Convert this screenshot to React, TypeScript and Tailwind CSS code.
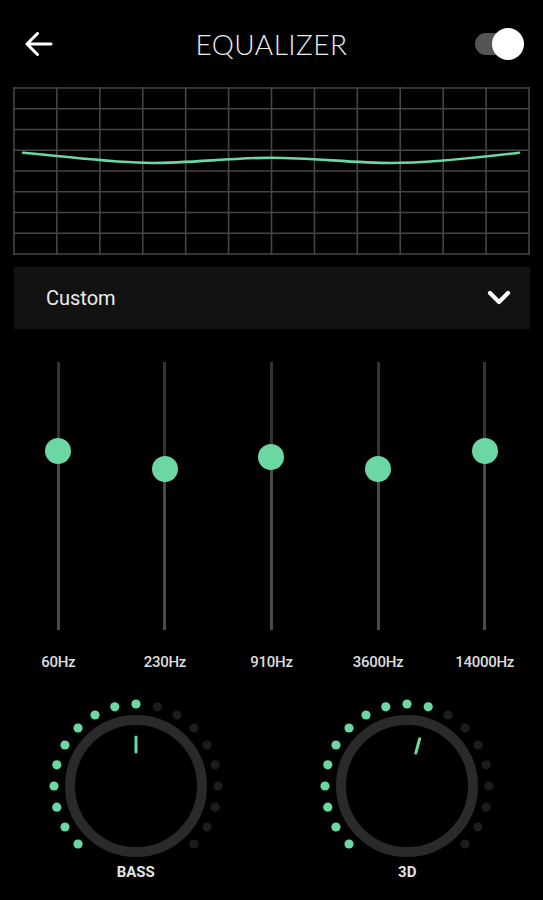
import React from "react";

const GREEN = "#6bd7a3";

function Knob({ value, angle, label }: { value: number; angle: number; label: string }) {
  const dots = [];
  for (let i = 0; i < 19; i++) {
    const a = (-135 + i * 15) * (Math.PI / 180);
    const x = 88 + 82 * Math.sin(a);
    const y = 88 - 82 * Math.cos(a);
    dots.push(<circle key={i} cx={x} cy={y} r={4.6} fill={i < value ? GREEN : "#1c1c1c"} />);
  }
  const r = (angle * Math.PI) / 180;
  const x1 = 88 + 34 * Math.sin(r);
  const y1 = 88 - 34 * Math.cos(r);
  const x2 = 88 + 49 * Math.sin(r);
  const y2 = 88 - 49 * Math.cos(r);
  return (
    <div className="flex flex-col items-center">
      <svg width="176" height="176" viewBox="0 0 176 176">
        {dots}
        <circle cx="88" cy="88" r="66" fill="none" stroke="#2a2a2a" strokeWidth="10" />
        <line x1={x1} y1={y1} x2={x2} y2={y2} stroke={GREEN} strokeWidth="3" strokeLinecap="round" />
      </svg>
      <div className="-mt-[12px] h-[20px] leading-[20px] text-[15px] font-bold text-[#e4e4e4]">{label}</div>
    </div>
  );
}

function Slider({ pos, label }: { pos: number; label: string }) {
  return (
    <div className="flex flex-col items-center">
      <div className="relative w-[3px] h-[268px] bg-[#4a4a4a]">
        <div className="absolute left-0 top-0 w-[3px] bg-[#333333]" style={{ height: pos }} />
        <div
          className="absolute left-1/2 -translate-x-1/2 -translate-y-1/2 w-[26px] h-[26px] rounded-full bg-[#6bd7a3]"
          style={{ top: pos }}
        />
      </div>
      <div className="mt-[22px] h-[20px] leading-[20px] text-[15px] font-medium tracking-[-0.3px] text-[#dedede]">
        {label}
      </div>
    </div>
  );
}

export default function App() {
  const vlines = [];
  for (let i = 0; i <= 12; i++) {
    const x = 1 + (i * 515) / 12;
    vlines.push(<line key={"v" + i} x1={x} y1={0} x2={x} y2={168} stroke="#454545" strokeWidth="1.6" />);
  }
  const hlines = [];
  for (let i = 0; i <= 8; i++) {
    const y = 1 + (i * 166) / 8;
    hlines.push(<line key={"h" + i} x1={0} y1={y} x2={517} y2={y} stroke="#454545" strokeWidth="1.6" />);
  }
  return (
    <div className="w-full min-h-[900px] bg-black" style={{ fontFamily: "Roboto, 'Noto Sans', sans-serif" }}>
      <div className="h-[87px] grid grid-cols-[1fr_auto_1fr] items-center">
        <div className="pl-[25px] flex items-center">
          <svg width="28" height="24" viewBox="0 0 28 24">
            <path d="M2 12 H26 M12.5 1.5 L2 12 L12.5 22.5" fill="none" stroke="#ffffff" strokeWidth="3" strokeLinecap="round" strokeLinejoin="round" />
          </svg>
        </div>
        <div className="text-[28px] font-light text-[#ececec] tracking-[0.5px]" style={{ fontFamily: "Lato, 'Open Sans', sans-serif" }}>
          EQUALIZER
        </div>
        <div className="flex justify-end pr-[19px]">
          <div className="relative w-[49px] h-[32px] flex items-center">
            <div className="w-[42px] h-[22px] rounded-full bg-[#555555]" />
            <div className="absolute right-0 top-0 w-[32px] h-[32px] rounded-full bg-white" />
          </div>
        </div>
      </div>

      <div className="mx-[13px] w-[517px] h-[168px]">
        <svg width="517" height="168" viewBox="0 0 517 168">
          {vlines}
          {hlines}
          <path
            d="M10 65.7 C 60 70, 100 76, 139 76 S 220 70.7, 259 70.7 S 340 76, 378 76 S 470 70, 506 65.7"
            fill="none"
            stroke={GREEN}
            strokeWidth="2.6"
            strokeLinecap="round"
          />
        </svg>
      </div>

      <div className="mt-[12px] ml-[14px] mr-[13px] h-[62px] bg-[#121212] flex items-center justify-between pl-[32px] pr-[18px]">
        <span className="text-[20px] text-[#ececec]">Custom</span>
        <svg width="26" height="18" viewBox="0 0 26 18">
          <path d="M4 4 L13 13 L22 4" fill="none" stroke="#ffffff" strokeWidth="4.2" strokeLinecap="round" strokeLinejoin="round" />
        </svg>
      </div>

      <div className="mt-[33px] px-[5px] grid grid-cols-5">
        <Slider pos={89} label="60Hz" />
        <Slider pos={107} label="230Hz" />
        <Slider pos={95} label="910Hz" />
        <Slider pos={107} label="3600Hz" />
        <Slider pos={89} label="14000Hz" />
      </div>

      <div className="mt-[26px] grid grid-cols-2">
        <Knob value={10} angle={0} label="BASS" />
        <Knob value={11} angle={15} label="3D" />
      </div>
    </div>
  );
}
